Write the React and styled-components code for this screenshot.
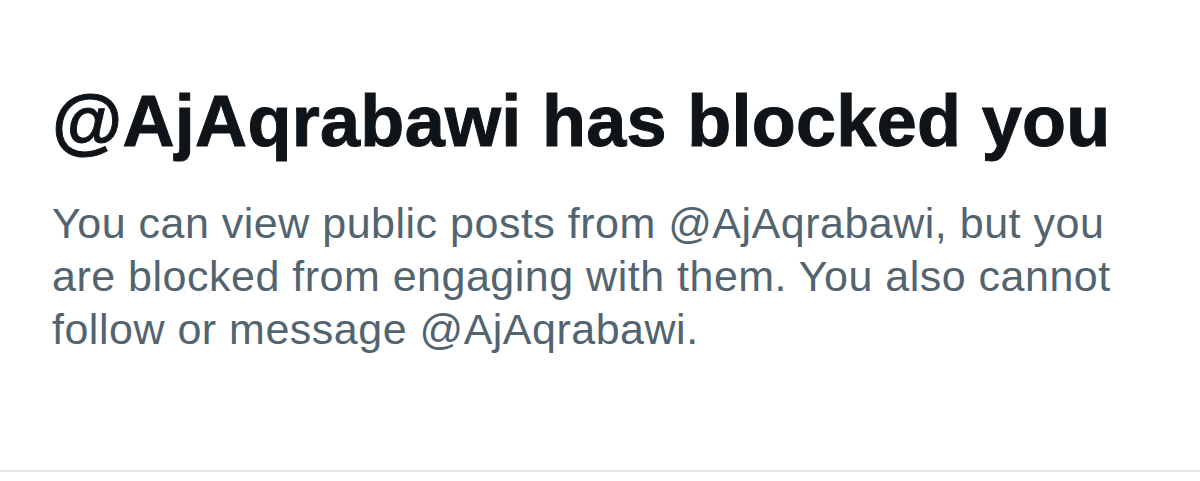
import React from "react";
import styled, { createGlobalStyle } from "styled-components";

const GlobalStyle = createGlobalStyle`
    html, body {
        margin: 0;
        padding: 0;
        background: #fff;
    }
    body {
        font-family: "Liberation Sans", Arial, sans-serif;
    }
`;

const App = () => {
    return (
        <>
            <GlobalStyle />
            <BlockedBlock>
                <div className="content">
                    <h1 className="title">@AjAqrabawi has blocked you</h1>
                    <p className="desc">
                        You can view public posts from @AjAqrabawi, but you are blocked from engaging with them. You
                        also cannot follow or message @AjAqrabawi.
                    </p>
                </div>
                <div className="divider" />
            </BlockedBlock>
        </>
    );
};

export default App;

const BlockedBlock = styled.div`
    display: flex;
    flex-direction: column;
    justify-content: space-between;
    height: 481px;
    width: 1200px;
    box-sizing: border-box;
    padding-top: 78px;
    padding-bottom: 9px;

    .content {
        padding: 0 52px;
    }

    .title {
        margin: 0;
        font-size: 72px;
        line-height: 86px;
        font-weight: 700;
        letter-spacing: 0.3px;
        color: #0f1419;
        -webkit-text-stroke: 1px #0f1419;
        white-space: nowrap;
    }

    .desc {
        margin: 33px 0 0;
        max-width: 1090px;
        font-size: 43px;
        line-height: 53px;
        letter-spacing: 0.5px;
        color: #536471;
    }

    .divider {
        height: 2px;
        background: #e6e6e6;
    }
`;
